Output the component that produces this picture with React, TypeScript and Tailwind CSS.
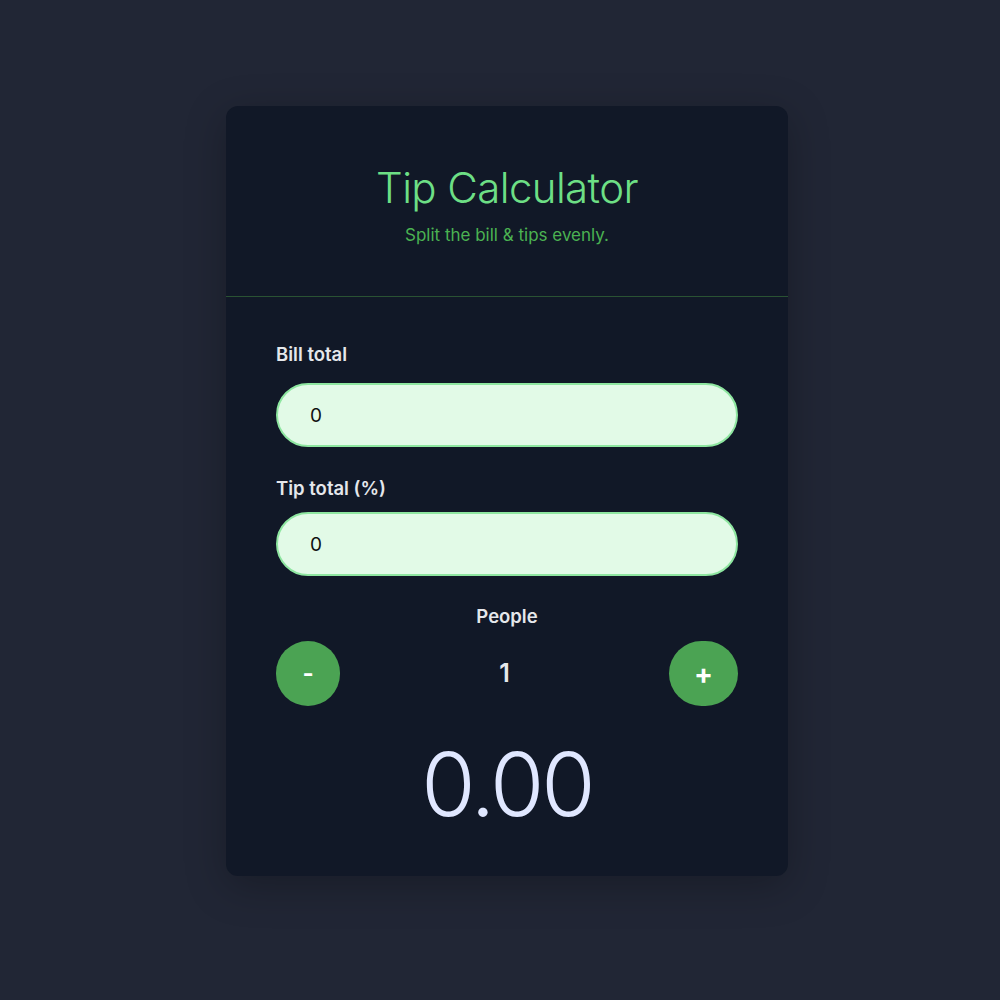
import React, { useState } from "react";

export default function App() {
  const [bill, setBill] = useState("0");
  const [tip, setTip] = useState("0");
  const [people, setPeople] = useState(1);
  const b = parseFloat(bill) || 0;
  const t = parseFloat(tip) || 0;
  const total = ((b + (b * t) / 100) / people).toFixed(2);

  return (
    <div
      className="min-h-screen w-full bg-[#212635] pl-[226px] pt-[106px]"
      style={{ fontFamily: "Inter, 'Noto Sans', sans-serif" }}
    >
      <div className="w-[562px] h-[770px] rounded-[12px] bg-[#111827] shadow-[0_10px_40px_rgba(0,0,0,0.25)] flex flex-col">
        <div className="h-[191px] border-b border-[#2a5233] flex flex-col items-center pt-[59px]">
          <h1 className="text-[42px] leading-[46px] font-light text-[#6ddf85] tracking-[-0.6px]">
            Tip Calculator
          </h1>
          <p className="mt-[12px] text-[17px] leading-[24px] text-[#4bb252]">
            Split the bill &amp; tips evenly.
          </p>
        </div>
        <div className="flex flex-col px-[50px] pt-[43px]">
          <label className="text-[18.5px] leading-[28px] font-semibold text-[#e5e7eb]">Bill total</label>
          <input
            value={bill}
            onChange={(e) => setBill(e.target.value)}
            className="mt-[15px] h-[64px] w-full rounded-full border-2 border-[#8ee6a0] bg-[#e2fae7] px-[32px] text-[19px] text-[#111] outline-none"
          />
          <label className="mt-[27px] text-[18.5px] leading-[28px] font-semibold text-[#e5e7eb]">Tip total (%)</label>
          <input
            value={tip}
            onChange={(e) => setTip(e.target.value)}
            className="mt-[10px] h-[64px] w-full rounded-full border-2 border-[#8ee6a0] bg-[#e2fae7] px-[32px] text-[19px] text-[#111] outline-none"
          />
          <div className="mt-[26px] text-center text-[18.5px] leading-[28px] font-semibold text-[#e5e7eb]">People</div>
          <div className="mt-[11px] flex items-center justify-between">
            <button
              onClick={() => setPeople((p) => Math.max(1, p - 1))}
              className="h-[65px] w-[64px] rounded-full bg-[#4ba353] text-[24px] font-bold text-white flex items-center justify-center"
            >
              -
            </button>
            <span className="text-[25px] font-semibold text-[#e5e7eb]">{people}</span>
            <button
              onClick={() => setPeople((p) => p + 1)}
              className="h-[65px] w-[69px] rounded-full bg-[#4ba353] text-[28px] font-bold text-white flex items-center justify-center"
            >
              +
            </button>
          </div>
          <div className="mt-[30px] text-center text-[88px] leading-[96px] font-light text-[#e0e7ff] tracking-[-3px]">
            {total}
          </div>
        </div>
      </div>
    </div>
  );
}
